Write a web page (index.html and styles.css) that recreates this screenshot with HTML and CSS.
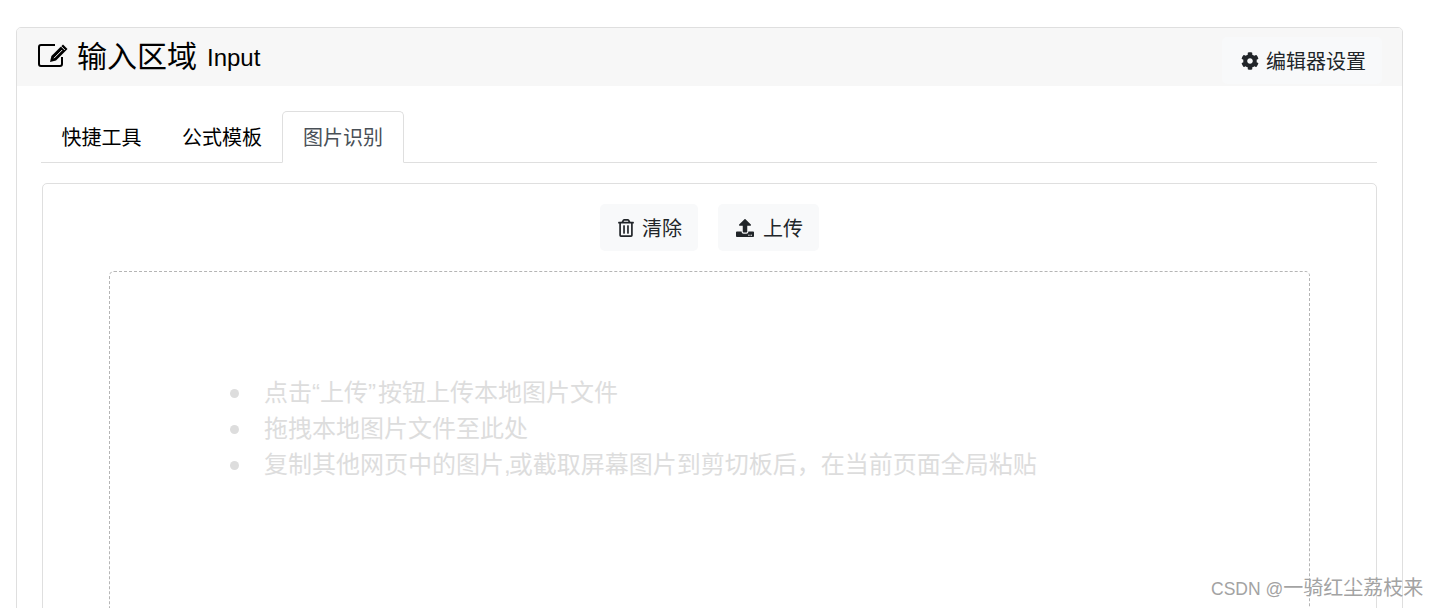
FILE: index.html
```html
<!DOCTYPE html>
<html lang="zh">
<head>
<meta charset="utf-8">
<title>输入区域</title>
<link rel="stylesheet" href="styles.css">
</head>
<body>
<section class="card">
  <header class="card-header">
    <h2 class="title">
      <svg class="icon-edit" viewBox="0 0 31 24">
        <path class="edit-box" d="M24 14v7a2 2 0 0 1-2 2H3a2 2 0 0 1-2-2V4a2 2 0 0 1 2-2h14"/>
        <path class="edit-pencil" d="M12 19l1.4-6L25 1.5 29.5 6 18 17.6z"/>
        <path class="edit-cut" d="M16 15.2L24.2 7M23 3.2l3.8 3.8"/>
      </svg>
      <span class="title-zh">输入区域</span>
      <span class="title-en">Input</span>
    </h2>
    <button class="btn btn-settings">
      <svg class="icon" viewBox="0 0 512 512"><path d="M487.4 315.7l-42.6-24.6c4.3-23.2 4.3-47 0-70.2l42.6-24.6c4.9-2.8 7.1-8.6 5.5-14-11.1-35.6-30-67.8-54.7-94.6-3.8-4.1-10-5.1-14.8-2.3L380.8 110c-17.9-15.4-38.5-27.3-60.8-35.1V25.8c0-5.6-3.9-10.5-9.4-11.7-36.7-8.2-74.3-7.8-109.2 0-5.5 1.2-9.4 6.1-9.4 11.7V75c-22.2 7.9-42.8 19.8-60.8 35.1L88.7 85.5c-4.9-2.8-11-1.9-14.8 2.3-24.7 26.7-43.6 58.9-54.7 94.6-1.7 5.4.6 11.2 5.5 14L67.3 221c-4.3 23.2-4.3 47 0 70.2l-42.6 24.6c-4.9 2.8-7.1 8.6-5.5 14 11.1 35.6 30 67.8 54.7 94.6 3.8 4.1 10 5.1 14.8 2.3l42.6-24.6c17.9 15.4 38.5 27.3 60.8 35.1v49.2c0 5.6 3.9 10.5 9.4 11.7 36.7 8.2 74.3 7.8 109.2 0 5.5-1.2 9.4-6.1 9.4-11.7v-49.2c22.2-7.9 42.8-19.8 60.8-35.1l42.6 24.6c4.9 2.8 11 1.9 14.8-2.3 24.7-26.7 43.6-58.9 54.7-94.6 1.5-5.5-.7-11.3-5.6-14.1zM256 336c-44.1 0-80-35.9-80-80s35.9-80 80-80 80 35.9 80 80-35.9 80-80 80z"/></svg>
      <span>编辑器设置</span>
    </button>
  </header>
  <div class="card-body">
    <nav class="tabs">
      <a class="tab">快捷工具</a>
      <a class="tab">公式模板</a>
      <a class="tab tab-active">图片识别</a>
    </nav>
    <div class="panel">
      <div class="toolbar">
        <button class="btn btn-clear">
          <svg class="icon icon-trash" viewBox="0 0 448 512"><path d="M268 416h24a12 12 0 0 0 12-12V188a12 12 0 0 0-12-12h-24a12 12 0 0 0-12 12v216a12 12 0 0 0 12 12zM432 80h-82.41l-34-56.7A48 48 0 0 0 274.41 0H173.59a48 48 0 0 0-41.16 23.3L98.41 80H16A16 16 0 0 0 0 96v16a16 16 0 0 0 16 16h16v336a48 48 0 0 0 48 48h288a48 48 0 0 0 48-48V128h16a16 16 0 0 0 16-16V96a16 16 0 0 0-16-16zM171.84 50.91A6 6 0 0 1 177 48h94a6 6 0 0 1 5.15 2.91L293.61 80H154.39zM368 464H80V128h288zm-212-48h24a12 12 0 0 0 12-12V188a12 12 0 0 0-12-12h-24a12 12 0 0 0-12 12v216a12 12 0 0 0 12 12z"/></svg>
          <span>清除</span>
        </button>
        <button class="btn btn-upload">
          <svg class="icon icon-upload" viewBox="0 0 512 512"><path d="M296 384h-80c-13.3 0-24-10.7-24-24V192h-87.7c-17.8 0-26.7-21.5-14.1-34.1L242.3 5.7c7.5-7.5 19.8-7.5 27.3 0l152.2 152.2c12.6 12.6 3.7 34.1-14.1 34.1H320v168c0 13.3-10.7 24-24 24zm216-8v112c0 13.3-10.7 24-24 24H24c-13.3 0-24-10.7-24-24V376c0-13.3 10.7-24 24-24h136v8c0 30.9 25.1 56 56 56h80c30.9 0 56-25.1 56-56v-8h136c13.3 0 24 10.7 24 24zm-124 88c0-11-9-20-20-20s-20 9-20 20 9 20 20 20 20-9 20-20zm64 0c0-11-9-20-20-20s-20 9-20 20 9 20 20 20 20-9 20-20z"/></svg>
          <span>上传</span>
        </button>
      </div>
      <div class="dropzone">
        <ul class="hints">
          <li><span>点击“上传<span class="wide">”</span>按钮上传本地图片文件</span></li>
          <li><span>拖拽本地图片文件至此处</span></li>
          <li><span>复制其他网页中的图片<span class="narrow">,</span>或截取屏幕图片到剪切板后，在当前页面全局粘贴</span></li>
        </ul>
      </div>
    </div>
  </div>
</section>
<div class="watermark"><span class="watermark-latin">CSDN @</span>一骑红尘荔枝来</div>
</body>
</html>
```
FILE: styles.css
```css
* { box-sizing: border-box; }
html, body { height: 608px; overflow: hidden; }
body {
  margin: 0;
  padding: 27px 35px 0 16px;
  background: #fff;
  color: #000;
  font-family: "Liberation Sans", "Noto Sans CJK SC", sans-serif;
  font-size: 20px;
  position: relative;
}
.card {
  border: 1px solid #dfdfdf;
  border-radius: 5px;
  height: 800px;
}
.card-header {
  height: 58px;
  background: #f7f7f7;
  border-radius: 4px 4px 0 0;
  display: flex;
  align-items: flex-start;
  justify-content: space-between;
  padding: 0 20px 0 21px;
}
.title {
  margin: 0;
  font-weight: 400;
  display: flex;
  align-items: center;
  height: 58px;
  padding-bottom: 2px;
}
.icon-edit { width: 31px; height: 24px; margin: 0 8px 3px 0; flex: none; }
.edit-box { fill: none; stroke: #000; stroke-width: 2; }
.edit-pencil { fill: #000; }
.edit-cut { fill: none; stroke: #f7f7f7; stroke-width: 1; }
.title-zh { font-size: 30px; margin-right: 10px; padding-bottom: 5px; }
.title-en { font-size: 24px; padding-top: 3px; }
.btn {
  border: 0;
  border-radius: 5px;
  background: #f8f9fa;
  color: #212529;
  font: inherit;
  display: flex;
  align-items: center;
  justify-content: center;
  height: 47px;
  padding: 0;
}
.btn-settings { margin-top: 9px; width: 160px; gap: 7px; padding-left: 3px; }
.icon { width: 18px; height: 18px; fill: #212529; }
.icon-trash { width: 16px; }
.card-body { padding: 25px 25px 0 24px; }
.tabs {
  display: flex;
  height: 52px;
  border-bottom: 1px solid #dfdfdf;
}
.tab {
  width: 121px;
  height: 52px;
  display: flex;
  align-items: center;
  justify-content: center;
  border: 1px solid transparent;
  border-radius: 5px 5px 0 0;
  padding-bottom: 2px;
}
.tab:nth-child(2) { width: 120px; }
.tab-active {
  width: 122px;
  color: #495057;
  background: #fff;
  border-color: #dfdfdf #dfdfdf #fff;
}
.panel {
  margin: 20px 0 0 1px;
  border: 1px solid #dfdfdf;
  border-radius: 5px;
  height: 560px;
  padding: 20px 66px 0;
}
.toolbar {
  display: flex;
  justify-content: center;
  gap: 20px;
}
.btn-clear { width: 98px; gap: 8px; padding-left: 2px; }
.btn-upload { width: 101px; gap: 9px; padding-left: 2px; }
.dropzone {
  margin-top: 20px;
  border: 1px dashed #b5b5b5;
  border-radius: 5px;
  height: 500px;
  padding-top: 103px;
  color: #ddd;
  font-size: 24px;
  line-height: 36px;
}
.hints {
  margin: 0;
  padding: 0 0 0 120px;
  list-style: none;
}
.hints li {
  display: flex;
  align-items: center;
  gap: 25px;
}
.hints li::before {
  content: "";
  width: 9px;
  height: 9px;
  border-radius: 50%;
  background: #ddd;
  flex: none;
}
.wide { padding-right: 2px; }
.narrow { letter-spacing: -2px; }
.watermark {
  position: absolute;
  left: 1211px;
  top: 575px;
  font-size: 20px;
  line-height: 26px;
  color: #a3a3a3;
  white-space: nowrap;
}
.watermark-latin { font-size: 17.5px; }
```
